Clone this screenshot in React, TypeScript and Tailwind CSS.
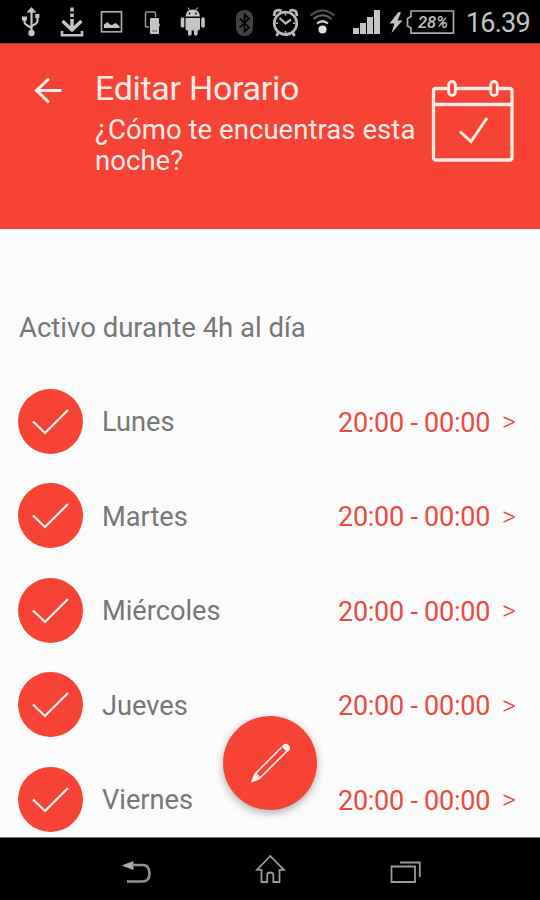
import React from "react";

const days = ["Lunes", "Martes", "Miércoles", "Jueves", "Viernes"];

function StatusBar() {
  return (
    <div className="flex h-[43px] shrink-0 bg-black pl-[18px] text-[#c4c4c4]">
      {/* usb */}
      <svg className="h-[43px] w-[32px]" viewBox="18 0 32 43" fill="none" stroke="currentColor" strokeWidth="2.2">
        <path d="M31.500 10V32M24.500 18V22Q24.500 24 26.500 25L31.500 28M37.500 16V20.500Q37.500 23 35.500 24L31.500 26" />
        <path d="M31.500 7L36.500 12.500H26.500Z M22 16.500H27V20.500H22Z M35.200 14H39.400V18H35.200Z" fill="currentColor" stroke="none" />
        <circle cx="31.500" cy="33" r="3.200" fill="currentColor" stroke="none" />
      </svg>
      {/* download */}
      <svg className="h-[43px] w-[44px]" viewBox="50 0 44 43" fill="none" stroke="currentColor" strokeWidth="3.400">
        <path d="M72 7.500V11.500M72 13.500V17M72 19V29M62.500 21L72 30L81.500 21" />
        <path d="M62 31V35.300H82V31" strokeWidth="2.600" />
      </svg>
      {/* picture */}
      <svg className="h-[43px] w-[38px]" viewBox="94 0 38 43">
        <rect x="101.500" y="11.800" width="20" height="20" fill="none" stroke="#aaa" strokeWidth="1.700" />
        <path d="M104 28V24.500L107.500 22L110 24.500L112 25L115.500 23L119.500 26V28Z" fill="currentColor" />
      </svg>
      {/* devices */}
      <svg className="h-[43px] w-[38px]" viewBox="132 0 38 43">
        <path d="M149 27H146.500Q145.500 27 145.500 26V13Q145.500 12 146.500 12H154.500Q155.500 12 155.500 13V17" fill="none" stroke="#999" strokeWidth="1.500" />
        <path d="M151 18H158Q159 18 159 19V23L160 25L159 27V32.500Q159 34 158 34H151Q150 34 150 32.500V19Q150 18 151 18Z" fill="currentColor" />
        <path d="M152 31H157" stroke="#555" strokeWidth="1" />
      </svg>
      {/* android */}
      <svg className="h-[43px] w-[54px]" viewBox="170 0 54 43">
        <path d="M185.500 16.500Q186 9.500 192.700 9.500Q199.500 9.500 200 16.500ZM185.500 18H200V28.500Q200 30.500 198 30.500H187.500Q185.500 30.500 185.500 28.500Z" fill="currentColor" />
        <path d="M182.500 19V26M203 19V26M189.800 29V34M195.800 29V34" stroke="currentColor" strokeWidth="3.600" strokeLinecap="round" />
        <path d="M188 7.500L189.800 10.500M197.500 7.500L195.700 10.500" stroke="currentColor" />
        <circle cx="189.500" cy="13.500" r=".9" fill="#000" />
        <circle cx="196" cy="13.500" r=".9" fill="#000" />
      </svg>
      {/* bluetooth */}
      <svg className="h-[43px] w-[42px]" viewBox="224 0 42 43">
        <rect x="236" y="10" width="17" height="26" rx="8" fill="#424242" />
        <path d="M239.700 18.500L249 27.500L244.500 31.500V14.500L249 18.500L239.700 27.500" fill="none" stroke="#000" strokeWidth="1.700" />
      </svg>
      {/* alarm */}
      <svg className="h-[43px] w-[40px]" viewBox="266 0 40 43" fill="none" stroke="#b8b8b8">
        <circle cx="285.500" cy="23.300" r="11.300" strokeWidth="2.600" />
        <path d="M274 16L275 11.500Q278 9 281.500 11M297 16L296 11.500Q293 9 289.500 11M278.500 32L276.500 36M292.500 32L294.500 36" strokeWidth="2.800" />
        <path d="M279.500 18L285.500 23.500L291 19.500" strokeWidth="2.200" />
        <path d="M285.500 13V15.500M285.500 31V33.500M275.500 23.300H278M293 23.300H295.500" strokeWidth="1.600" />
      </svg>
      {/* wifi */}
      <svg className="h-[43px] w-[38px]" viewBox="306 0 38 43" fill="none">
        <circle cx="322.500" cy="29.500" r="4.100" fill="#ddd" />
        <path d="M317 23.500Q322.500 19 328 23.500" stroke="#d0d0d0" strokeWidth="2.200" />
        <path d="M313.500 19Q322.500 11.500 331.500 19" stroke="#666" strokeWidth="2" />
        <path d="M310.500 15.500Q322.500 5.500 334.500 15.500" stroke="#555" strokeWidth="2" />
      </svg>
      {/* signal */}
      <svg className="h-[43px] w-[42px]" viewBox="344 0 42 43" fill="currentColor">
        <path d="M353 28H359V34H353ZM360 23H366V34H360ZM367 17H373V34H367ZM374 10H380V34H374Z" />
      </svg>
      {/* charging battery */}
      <svg className="h-[43px] w-[72px]" viewBox="386 0 72 43">
        <path d="M398.500 12L389.500 23.500H394.500L391.500 33L402.500 20.500H397.500L401 12.500Z" fill="currentColor" />
        <path d="M411 11H453.500V33.200H411V28L407.500 26V18.500L411 16.500Z" fill="none" stroke="#aaa" strokeWidth="1.700" />
        <text x="418" y="28.300" fill="currentColor" fontFamily="Roboto, sans-serif" fontSize="16.300" fontStyle="italic" fontWeight="500" textLength="30" lengthAdjust="spacingAndGlyphs">28%</text>
      </svg>
      <span className="ml-[8px] font-[Roboto,sans-serif] text-[27px] leading-[46px] tracking-[-0.8px]">16.39</span>
    </div>
  );
}

function Header() {
  return (
    <header className="flex h-[186px] shrink-0 border-t border-[#b93126] bg-[#f64336] text-[#ffebe5]">
      <svg className="ml-[30px] mt-[28px] h-[36px] w-[36px] shrink-0" viewBox="30 72 36 36" fill="none" stroke="#fff1ed" strokeWidth="3">
        <path d="M61.500 90.500H36.500M49 78.500L36.500 90.500L49 102.500" />
      </svg>
      <div className="ml-[29px] w-[330px] shrink-0 pt-[23px]">
        <h1 className="whitespace-nowrap text-[34px] leading-[42px] tracking-[-0.3px]">Editar Horario</h1>
        <p className="mt-[5px] whitespace-nowrap text-[27.500px] leading-[31px] tracking-[0.05px]">
          ¿Cómo te encuentras esta
          <br />
          noche?
        </p>
      </div>
      <svg className="ml-[1px] mt-[28px] h-[100px] w-[100px] shrink-0" viewBox="426 72 100 100" fill="none" stroke="#ffebe5">
        <path d="M447.500 88.500H436Q433.500 88.500 433.500 91V157.500Q433.500 160 436 160H509.500Q512 160 512 157.500V91Q512 88.500 509.500 88.500H498.500M456 88.500H489.500M433.500 104.500H512" strokeWidth="3.300" />
        <rect x="448.700" y="81.500" width="6.600" height="14" rx="3.300" strokeWidth="2.900" />
        <rect x="490.700" y="81.500" width="6.600" height="14" rx="3.300" strokeWidth="2.900" />
        <path d="M460 131.500L471 141.500L487 118" strokeWidth="3" />
      </svg>
    </header>
  );
}

function DayRow({ name }: { name: string }) {
  return (
    <li className="flex h-[94.500px] shrink-0 items-center pl-[18.400px]">
      <span className="flex size-[65px] items-center justify-center rounded-full bg-[#f64336]">
        <svg className="size-[65px]" viewBox="0.5 0.5 65 65" fill="none" stroke="#fff0eb" strokeWidth="2.300">
          <path d="M15.500 33L27.500 44.500L50.500 21.500" />
        </svg>
      </span>
      <span className="ml-[18.600px] w-[236px] pt-[3px] text-[27.200px] text-[#777]">{name}</span>
      <span className="w-[164px] whitespace-nowrap pt-[3px] text-[27px] tracking-[-0.25px] text-[#eb4a41]">20:00 - 00:00</span>
      <span className="pt-[2px] text-[27px] font-light text-[#eb4a41]">&gt;</span>
    </li>
  );
}

function NavBar() {
  return (
    <nav className="flex h-[63px] shrink-0 border-t border-[#777] bg-black pl-[110px] text-[#999]">
      <svg className="h-[62px] w-[50px]" viewBox="110 838 50 62">
        <path d="M121.500 865.500L133.500 861V870Z" fill="#aaa" />
        <path d="M132 865H142.500Q149.500 865 149.500 873.500Q149.500 881.500 142.500 881.500H127" fill="none" stroke="#919191" strokeWidth="2.600" />
      </svg>
      <svg className="ml-[85px] h-[62px] w-[50px]" viewBox="245 838 50 62" fill="none" stroke="currentColor" strokeWidth="1.800">
        <path d="M270.300 856L257 869.800H261.500V882H267.200V875Q267.200 872.500 270.300 872.500Q273.300 872.500 273.300 875V882H279.500V869.800H284Z" />
      </svg>
      <svg className="ml-[85px] h-[62px] w-[50px]" viewBox="380 838 50 62" fill="none" stroke="currentColor" strokeWidth="1.800">
        <path d="M391.500 866.500H415V882H391.500ZM400 862.500H419.800V877" />
      </svg>
    </nav>
  );
}

export default function App() {
  return (
    <div className="relative flex h-[900px] w-[540px] flex-col overflow-hidden bg-[#fbfbfb] font-[Roboto,sans-serif]">
      <StatusBar />
      <Header />
      <main className="h-[608px] shrink-0 overflow-hidden pt-[78px]">
        <h2 className="ml-[19px] pt-px text-[27.500px] leading-[40px] text-[#777]">Activo durante 4h al día</h2>
        <ul className="mt-[26px] flex flex-col">
          {days.map((day) => (
            <DayRow key={day} name={day} />
          ))}
        </ul>
      </main>
      <NavBar />
      <button className="absolute left-[223px] top-[716px] size-[94px] rounded-full bg-[#f64336] shadow-[0_3px_8px_rgba(0,0,0,0.3)]" aria-label="Editar">
        <svg className="size-[94px]" viewBox="223 716 94 94" fill="none" stroke="#fff0eb" strokeWidth="1.600" strokeLinejoin="round">
          <path d="M252 781.500L255.500 773.500L281.500 747.500M252 781.500L259.500 778.500L286.500 751.500M256 773.500L259.500 777.500" />
          <path d="M252 781.500L254.800 774.800L258.500 778.700ZM282.500 746.500Q285.500 743 288 745.500Q290.800 748.500 287.500 751.200Z" fill="#fff0eb" />
        </svg>
      </button>
    </div>
  );
}
